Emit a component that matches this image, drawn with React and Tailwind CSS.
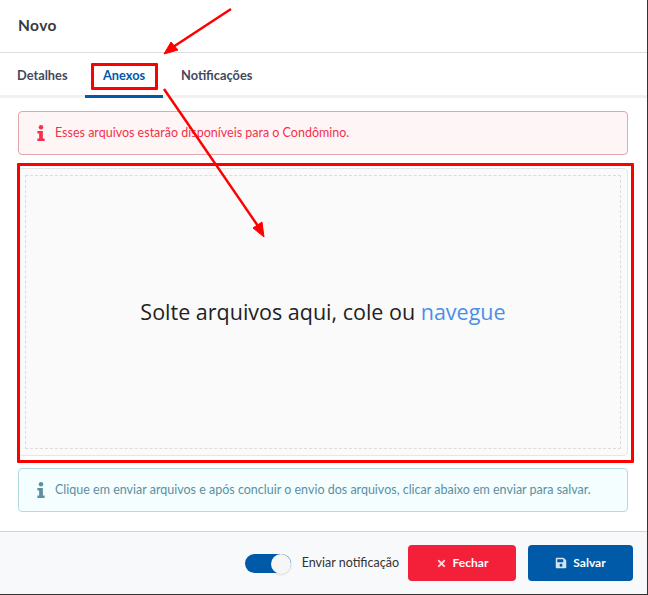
import { FaTimes, FaSave } from "react-icons/fa";

function InfoMark({ className }) {
  return (
    <svg viewBox="0 0 10 20" className={className} fill="currentColor">
      <circle cx="5" cy="2.8" r="2.8" />
      <path d="M.5 7.5h6.8v9.3H9.5V20H.5v-3.2h2.2v-6.1H.5z" />
    </svg>
  );
}

function Notice({ tone, children }) {
  return (
    <div className={`flex h-[44px] items-center rounded border pl-[18px] text-[12.5px] ${tone}`}>
      <InfoMark className="mr-[10px] h-[20px] w-[8px] shrink-0" />
      <span>{children}</span>
    </div>
  );
}

export default function App() {
  return (
    <div className="relative h-[595px] w-[648px] overflow-hidden bg-white font-['Lato','Noto_Sans',sans-serif]">
      <div className="flex h-[595px] w-[648px] flex-col border-r border-b border-[#333] bg-white">
        {/* Header */}
        <div className="flex h-[53px] items-center border-b border-[#dcdde2] pl-[18px]">
          <h1 className="text-[15.5px] font-bold tracking-wide text-[#3a3a3c]">Novo</h1>
        </div>

        {/* Tabs */}
        <div className="flex h-[45px] border-b-[3px] border-[#f1f1f2] text-[12.8px] font-bold text-[#44495a]">
          <div className="w-[85px] pl-[17px] pt-[13px]">Detalhes</div>
          <div className="-mb-[3px] w-[78px] border-b-[3px] border-[#005aa8] pl-[18px] pt-[13px] text-[#005aa8]">Anexos</div>
          <div className="pl-[18px] pt-[13px]">Notificações</div>
        </div>

        {/* Body */}
        <div className="flex flex-1 flex-col pl-[18px] pr-[19px] pt-[13px]">
          <Notice tone="border-[#e3a6ac] bg-[#fef6f6] text-[#f5304a]">
            Esses arquivos estarão disponíveis para o Condômino.
          </Notice>

          <div className="mt-[13px] h-[288px] rounded border border-[#e6e6e6] bg-[#fafafa] p-[6px]">
            <div className="flex h-full items-center justify-center border border-dashed border-[#dcdcdc]">
              <p className="font-['Open_Sans',sans-serif] text-[21.5px] text-[#222]">
                Solte arquivos aqui, cole ou <span className="text-[#4a8fe7]">navegue</span>
              </p>
            </div>
          </div>

          <div className="mt-[12px]">
            <Notice tone="border-[#b0dbe3] bg-[#f4feff] text-[#5b8fa3]">
              Clique em enviar arquivos e após concluir o envio dos arquivos, clicar abaixo em enviar para salvar.
            </Notice>
          </div>
        </div>

        {/* Footer */}
        <div className="flex h-[63px] items-start justify-end border-t border-[#d6d6d8] bg-[#f8f9fb] pr-[14px] pt-[13px]">
          <div className="mr-[9px] flex h-[36px] items-center">
            <div className="relative mr-[11px] h-[19px] w-[46px] rounded-full bg-[#005aa8]">
              <div className="absolute right-0 top-0 h-[20px] w-[20px] rounded-full bg-[#f6f6f6] shadow" />
            </div>
            <span className="text-[12.5px] text-[#333]">Enviar notificação</span>
          </div>
          <button className="flex h-[36px] w-[108px] items-center justify-center gap-[6px] rounded bg-[#f41f38] text-[12px] font-bold text-white">
            <FaTimes className="h-[11px] w-[11px] text-[#f7d5da]" />
            Fechar
          </button>
          <button className="ml-[12px] flex h-[36px] w-[105px] items-center justify-center gap-[6px] rounded bg-[#005aa8] text-[12px] font-bold text-white">
            <FaSave className="h-[12px] w-[12px] text-[#d5e3f0]" />
            Salvar
          </button>
        </div>
      </div>

      {/* Red annotations drawn on top of the screenshot */}
      <div className="absolute left-[91px] top-[63px] h-[27px] w-[67px] rounded-[1px] border-[3px] border-[#f00]" />
      <div className="absolute left-[17px] top-[163px] h-[300px] w-[617px] rounded-[1px] border-[3px] border-[#f00]" />
      <svg className="pointer-events-none absolute left-0 top-0" width="648" height="595" fill="#f00" stroke="#f00">
        <path d="M231 9 L170 49" strokeWidth="2.5" />
        <path d="M164 54 L178 50 L171 42 Z" />
        <path d="M164 89 L258 226" strokeWidth="2.5" />
        <path d="M264 237 L262 222 L253 228 Z" />
      </svg>
    </div>
  );
}
